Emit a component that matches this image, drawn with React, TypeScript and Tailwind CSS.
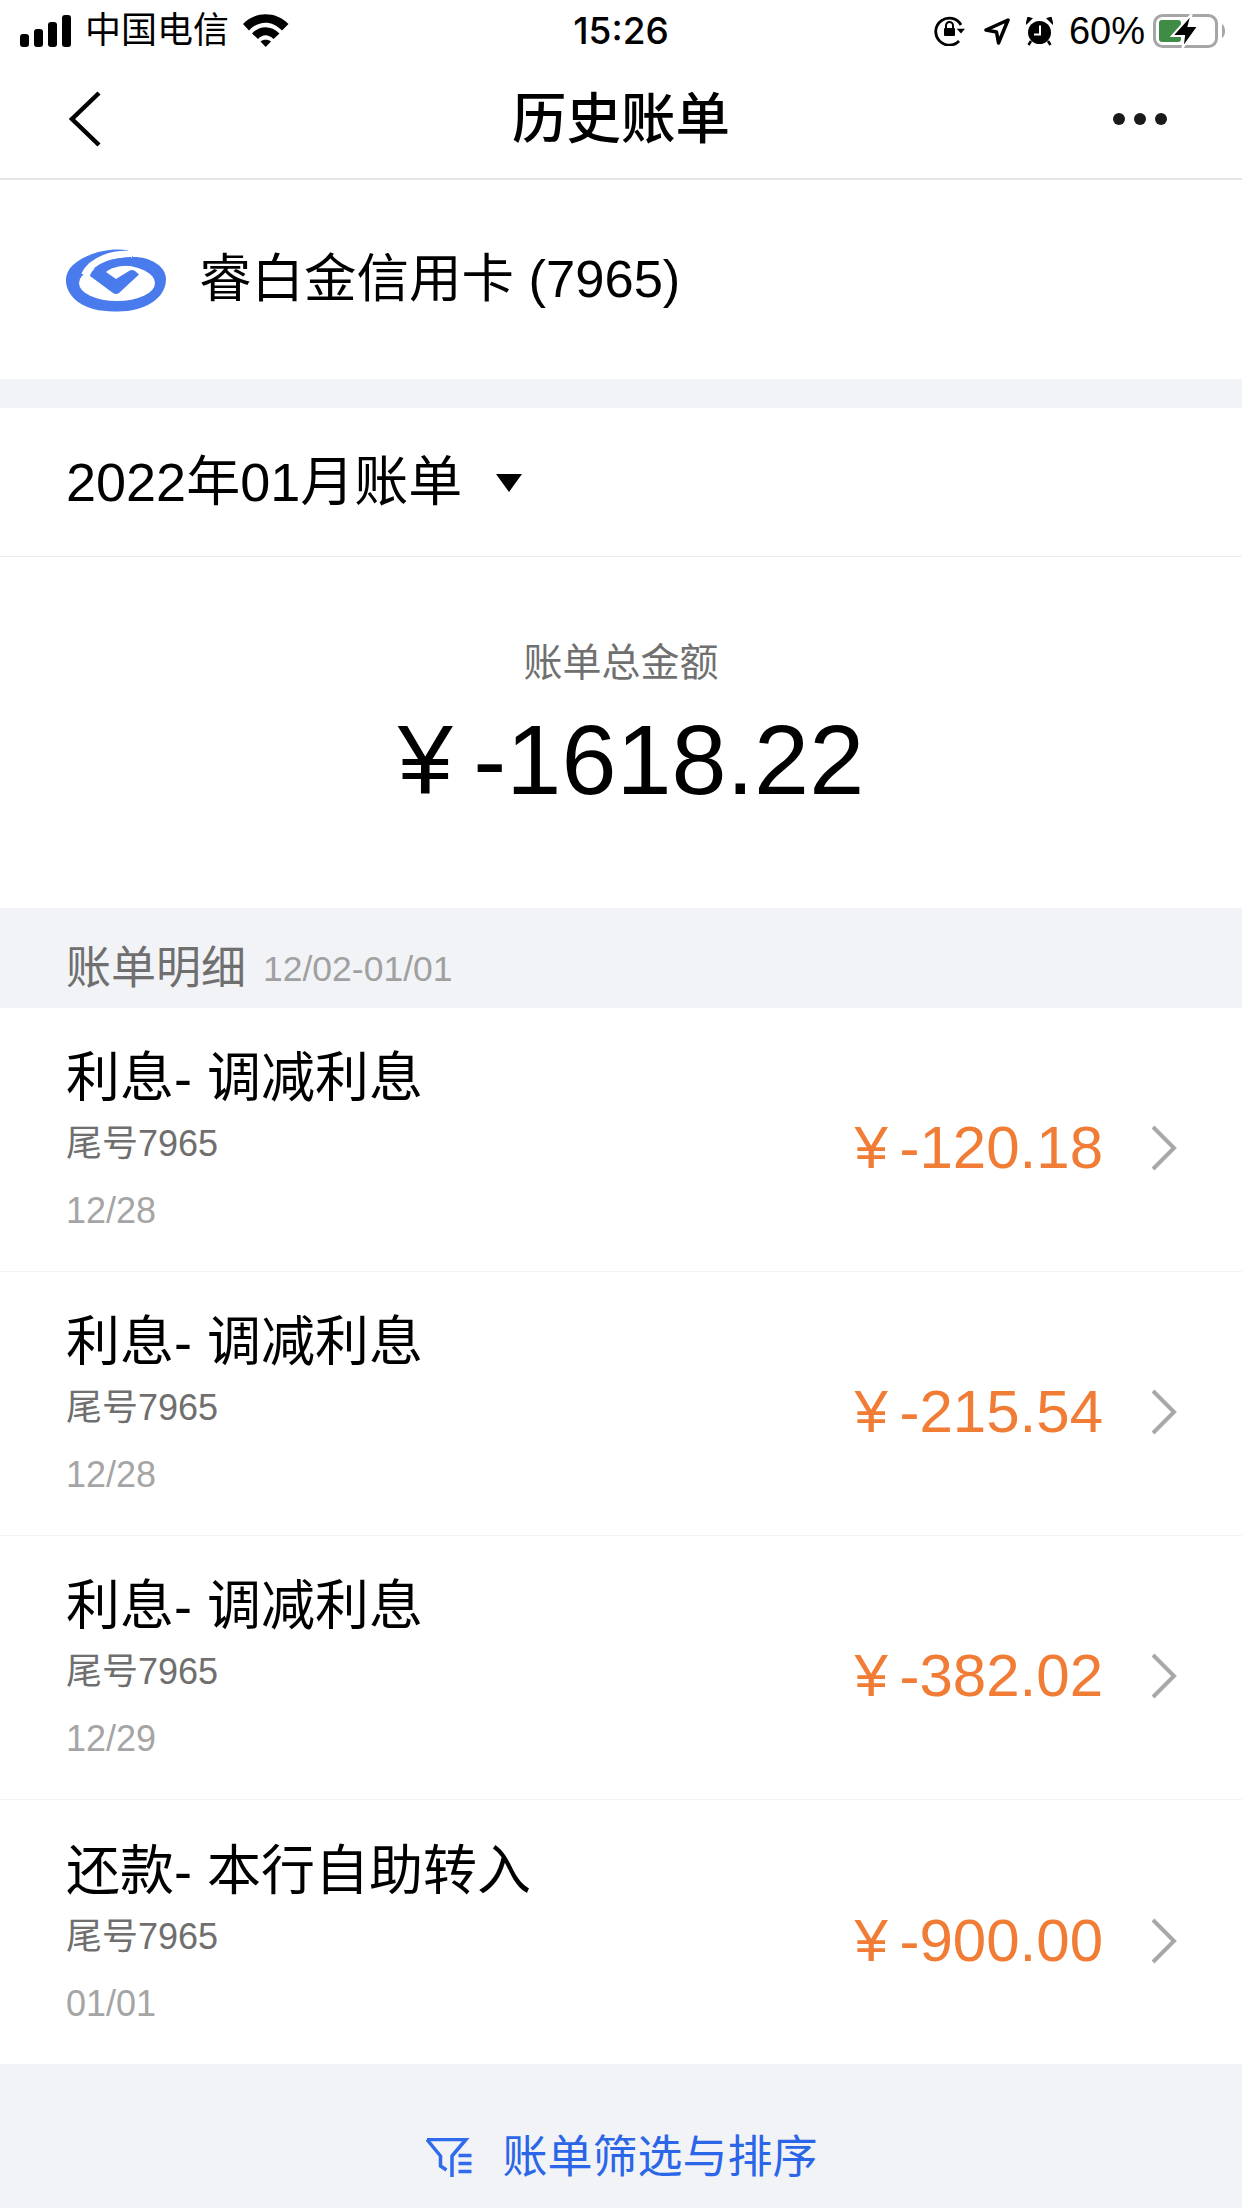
import React from "react";

const FONT = "font-['Liberation_Sans','Noto_Sans_CJK_SC',sans-serif]";

const rows = [
  { title: "利息- 调减利息", date: "12/28", amount: "-120.18" },
  { title: "利息- 调减利息", date: "12/28", amount: "-215.54" },
  { title: "利息- 调减利息", date: "12/29", amount: "-382.02" },
  { title: "还款- 本行自助转入", date: "01/01", amount: "-900.00" },
];

function Signal() {
  return (
    <svg width="52" height="33" viewBox="0 0 52 33" fill="#000">
      <rect x="0" y="19" width="9" height="13" rx="3" />
      <rect x="14" y="14" width="9" height="18" rx="3" />
      <rect x="28" y="7" width="9" height="25" rx="3" />
      <rect x="42" y="0" width="9" height="32" rx="3" />
    </svg>
  );
}

function Wifi() {
  return (
    <svg width="46" height="34" viewBox="0 0 46 34" fill="#000">
      <path d="M0 10C12 -3 33 -3 45.500 10L39 16.500C29 6 16 6 6 16.500Z" />
      <path d="M9 19.500C17 11 28 11 36.500 19.500L30.500 25C25 20 20 20 15 25Z" />
      <path d="M17.500 27.500C20 25 25.500 25 28 27.500L22.700 33Z" />
    </svg>
  );
}

function StatusIcons() {
  return (
    <div className="flex items-center">
      {/* rotation lock */}
      <svg width="32" height="30" viewBox="0 0 32 30" fill="none" className="mr-[17px]">
        <path d="M27 9A13.500 13.500 0 1 0 25 25" stroke="#000" strokeWidth="2.800" />
        <path d="M22.700 12.700H31L27 17.500Z" fill="#000" />
        <rect x="10" y="12" width="11" height="8" rx="1" fill="#000" />
        <path d="M12 12V9.500A3.500 3.500 0 0 1 19 9.500V12" stroke="#000" strokeWidth="2" />
      </svg>
      {/* location */}
      <svg width="27" height="27" viewBox="0 0 27 27" fill="none" className="mr-[16px]">
        <path d="M25 2L3 12L13.500 14L15.500 25Z" stroke="#000" strokeWidth="3.500" strokeLinejoin="round" />
      </svg>
      {/* alarm */}
      <svg width="27" height="29" viewBox="0 0 27 29" className="mr-[16px]">
        <circle cx="13.500" cy="15.500" r="11.500" fill="#000" />
        <path d="M0.500 6.500L5.500 1.500L2 0.500Z M26.500 6.500L21.500 1.500L25 0.500Z" fill="#000" stroke="#000" strokeWidth="1.500" />
        <path d="M5 24L2.500 28M22 24L24.500 28" stroke="#000" strokeWidth="2.500" />
        <path d="M14 8.500V17.500H8" fill="none" stroke="#fff" strokeWidth="2" />
      </svg>
      <span className="text-[38px] leading-[38px] text-black mr-[8px]">60%</span>
      {/* battery */}
      <svg width="74" height="36" viewBox="0 0 74 36" fill="none">
        <rect x="1.500" y="2.500" width="62" height="31" rx="8" stroke="#a6a6a6" strokeWidth="3" />
        <rect x="6" y="7" width="22" height="22" rx="3" fill="#3f8c46" />
        <path d="M69 11C73 13 73 23 69 25Z" fill="#a6a6a6" />
        <path d="M38.700 1L19 23H31L29.500 35L45.300 13H35.600Z" fill="#000" stroke="#fff" strokeWidth="2" />
      </svg>
    </div>
  );
}

function BankLogo() {
  return (
    <svg width="100" height="64" viewBox="10 9 100 64" className="shrink-0">
      <path
        fill="#4a7bed"
        d="M72 11.500C55 8 30 14 17 26C6 36 8 52 22 63C35 72 50 72.500 62 72.500C88 72.500 110 60 110 40C110 26 92 17.500 77 18Z"
      />
      <ellipse cx="61" cy="44" rx="38" ry="18" fill="#fff" />
      <path d="M76 15.500C58 14 36 20 28.500 36" fill="none" stroke="#fff" strokeWidth="7" />
      <path
        fill="#4a7bed"
        d="M34 37C36 28 52 19 75 18L78 26.500C64 26 54 29 50 33L60 40L73 32Q76 30 79 32L83 35.500L63 54Q60 56 57 54Z"
      />
    </svg>
  );
}

function Chevron() {
  return (
    <svg width="26" height="46" viewBox="0 0 26 46" fill="none">
      <path d="M2 2L23 23L2 44" stroke="#a8a8a8" strokeWidth="4" />
    </svg>
  );
}

function FilterIcon() {
  return (
    <svg width="46" height="40" viewBox="0 0 46 40" fill="none" stroke="#2f6bec" strokeWidth="3.500">
      <path d="M1 1.500H40L26 18V39" />
      <path d="M1 1.500L14.500 18V28L20.500 32" />
      <path d="M32.500 17.500H45.500M32.500 25.500H45.500M32.500 33.500H45.500" />
    </svg>
  );
}

function BillRow({ title, date, amount, last }: { title: string; date: string; amount: string; last: boolean }) {
  return (
    <div className={`h-[264px] shrink-0 flex items-center justify-between pl-[66px] pr-[65px] bg-white ${last ? "" : "border-b border-[#f3f3f3]"}`}>
      <div className="flex flex-col">
        <div className="text-[54px] leading-[60px] text-black">{title}</div>
        <div className="text-[36px] leading-[40px] text-[#6f6f6f] mt-[16px]">尾号7965</div>
        <div className="text-[36px] leading-[40px] text-[#a5a5a5] mt-[27px]">{date}</div>
      </div>
      <div className="flex items-center mt-[17px]">
        <span className="text-[60px] leading-[70px] text-[#f07c35] [word-spacing:-5px]">¥ {amount}</span>
        <span className="ml-[48px] flex">
          <Chevron />
        </span>
      </div>
    </div>
  );
}

export default function App() {
  return (
    <div className={`w-[1242px] h-[2208px] overflow-hidden bg-white flex flex-col ${FONT}`}>
      <div className="h-[60px] shrink-0 flex items-center justify-between pl-[20px] pr-[15px] pt-[2px] relative">
        <div className="flex items-center">
          <Signal />
          <span className="text-[36px] leading-[40px] text-black ml-[13px]">中国电信</span>
          <span className="ml-[14px] flex">
            <Wifi />
          </span>
        </div>
        <div className="absolute left-0 right-0 text-center font-['Inter'] text-[37px] leading-[40px] font-medium text-black pointer-events-none">15:26</div>
        <StatusIcons />
      </div>

      <div className="h-[120px] shrink-0 flex items-center justify-between pl-[68px] pr-[75px] border-b-2 border-[#e6e6e6] relative">
        <svg width="34" height="56" viewBox="0 0 34 56" fill="none">
          <path d="M31 2L4 28L31 54" stroke="#000" strokeWidth="4.500" />
        </svg>
        <div className="absolute left-0 right-0 text-center text-[54.500px] leading-[64px] font-medium text-black mt-[2px]">历史账单</div>
        <div className="flex gap-[9px]">
          <span className="w-[12px] h-[12px] rounded-full bg-[#1a1a1a]" />
          <span className="w-[12px] h-[12px] rounded-full bg-[#1a1a1a]" />
          <span className="w-[12px] h-[12px] rounded-full bg-[#1a1a1a]" />
        </div>
      </div>

      <div className="h-[199px] shrink-0 flex items-center pl-[66px]">
        <BankLogo />
        <span className="ml-[33px] text-[52.500px] leading-[60px] text-black mb-[2px]">睿白金信用卡 (7965)</span>
      </div>

      <div className="h-[29px] shrink-0 bg-[#f2f3f7]" />

      <div className="h-[149px] shrink-0 flex items-center pl-[66px] border-b border-[#ececec]">
        <span className="text-[54px] leading-[60px] text-black">2022年01月账单</span>
        <svg width="28" height="20" viewBox="0 0 28 20" className="ml-[33px] mt-[2px]">
          <path d="M1 1H27L14 19Z" fill="#000" />
        </svg>
      </div>

      <div className="h-[351px] shrink-0 flex flex-col items-center pt-[83px]">
        <div className="text-[39px] leading-[46px] text-[#707070]">账单总金额</div>
        <div className="text-[99px] leading-[110px] text-black mt-[19px] ml-[20px] [word-spacing:-7px]">¥ -1618.22</div>
      </div>

      <div className="h-[100px] shrink-0 bg-[#f2f3f7] flex items-center pl-[66px] pt-[22px]">
        <span className="text-[45px] leading-[52px] text-[#6f6f6f]">账单明细</span>
        <span className="ml-[17px] text-[35.500px] leading-[44px] text-[#a0a0a0]">12/02-01/01</span>
      </div>

      {rows.map((row, i) => (
        <BillRow key={i} title={row.title} date={row.date} amount={row.amount} last={i === rows.length - 1} />
      ))}

      <div className="flex-1 bg-[#f2f3f7] flex items-center justify-center pl-[2px] pt-[44px]">
        <FilterIcon />
        <span className="ml-[30px] text-[45px] leading-[52px] text-[#2b66e8]">账单筛选与排序</span>
      </div>
    </div>
  );
}
